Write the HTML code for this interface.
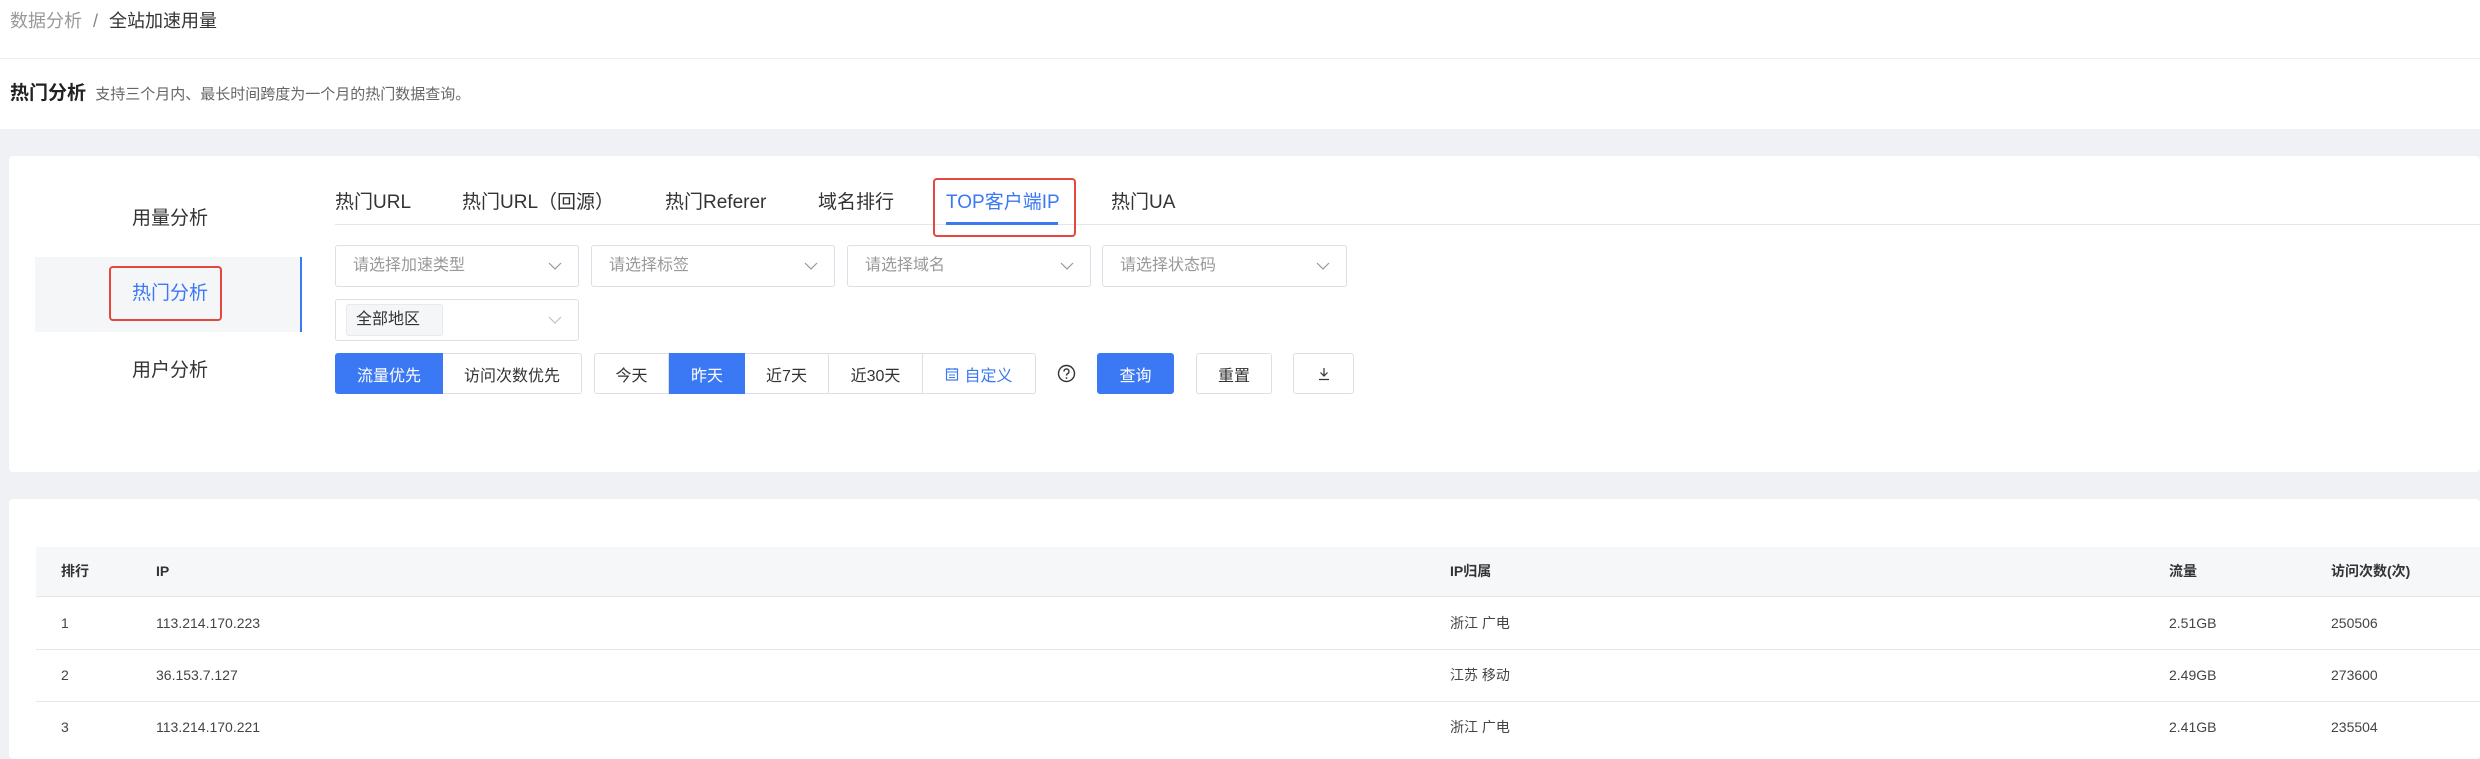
<!DOCTYPE html>
<html><head><meta charset="utf-8"><style>
*{box-sizing:border-box;margin:0;padding:0}
body{width:2480px;height:750px;overflow:hidden;background:#f0f1f4;font-family:"Liberation Sans","Noto Sans CJK SC",sans-serif;color:#333;position:relative}
.a{position:absolute}
.t{position:absolute;white-space:nowrap;line-height:1}
.sel{position:absolute;border:1px solid #dcdfe6;border-radius:3px;background:#fff;height:42px}
.sel span{position:absolute;left:17px;top:12px;font-size:16px;color:#999;line-height:1}
.arr{position:absolute;right:16px;top:13px;width:14px;height:14px}
.btn{position:absolute;top:353px;height:41px;border:1px solid #dcdfe6;background:#fff;font-size:16px;display:flex;align-items:center;justify-content:center;color:#333}
.blue{background:#3b78f3;color:#fff;border-color:#3b78f3}
.tab{position:absolute;top:193px;font-size:19px;white-space:nowrap;line-height:1}
.th{position:absolute;top:564px;font-size:14px;font-weight:bold;white-space:nowrap;line-height:1}
.td{position:absolute;font-size:14px;white-space:nowrap;line-height:1;color:#444}
</style></head><body>
<div class="a" style="left:0;top:0;width:2480px;height:58px;background:#fff"></div>
<div class="t" style="left:10px;top:12px;font-size:18px;color:#999">数据分析 <span style="color:#888;margin:0 6px">/</span> <span style="color:#333">全站加速用量</span></div>
<div class="a" style="left:0;top:58px;width:2480px;height:71px;background:#fff;border-top:1px solid #f0f0f0"></div>
<div class="t" style="left:10px;top:84px;font-size:19px;font-weight:bold;color:#222">热门分析 <span style="font-size:15px;font-weight:normal;color:#666;margin-left:4px">支持三个月内、最长时间跨度为一个月的热门数据查询。</span></div>

<div class="a" style="left:9px;top:156px;width:2471px;height:316px;background:#fff;border-radius:4px"></div>
<div class="t" style="left:132px;top:209px;font-size:19px;color:#333">用量分析</div>
<div class="a" style="left:35px;top:257px;width:267px;height:75px;background:#f5f6f8;border-right:2px solid #3b78f3"></div>
<div class="t" style="left:132px;top:284px;font-size:19px;color:#3b78f3">热门分析</div>
<div class="a" style="left:109px;top:266px;width:113px;height:55px;border:2px solid #e5473f;border-radius:4px"></div>
<div class="t" style="left:132px;top:361px;font-size:19px;color:#333">用户分析</div>

<div class="tab" style="left:335px">热门URL</div>
<div class="tab" style="left:462px">热门URL（回源）</div>
<div class="tab" style="left:665px">热门Referer</div>
<div class="tab" style="left:818px">域名排行</div>
<div class="tab" style="left:946px;color:#3b78f3">TOP客户端IP</div>
<div class="tab" style="left:1111px">热门UA</div>
<div class="a" style="left:335px;top:224px;width:2145px;height:1px;background:#e4e6eb"></div>
<div class="a" style="left:946px;top:222px;width:112px;height:3px;background:#3b78f3"></div>
<div class="a" style="left:933px;top:178px;width:143px;height:59px;border:2px solid #e5473f;border-radius:4px"></div>

<div class="sel" style="left:335px;top:245px;width:244px"><span>请选择加速类型</span><svg class="arr" viewBox="0 0 14 14"><path d="M1 4l6 6 6-6" fill="none" stroke="#999" stroke-width="1.2"/></svg></div>
<div class="sel" style="left:591px;top:245px;width:244px"><span>请选择标签</span><svg class="arr" viewBox="0 0 14 14"><path d="M1 4l6 6 6-6" fill="none" stroke="#999" stroke-width="1.2"/></svg></div>
<div class="sel" style="left:847px;top:245px;width:244px"><span>请选择域名</span><svg class="arr" viewBox="0 0 14 14"><path d="M1 4l6 6 6-6" fill="none" stroke="#999" stroke-width="1.2"/></svg></div>
<div class="sel" style="left:1102px;top:245px;width:245px"><span>请选择状态码</span><svg class="arr" viewBox="0 0 14 14"><path d="M1 4l6 6 6-6" fill="none" stroke="#999" stroke-width="1.2"/></svg></div>
<div class="sel" style="left:335px;top:299px;width:244px"><div class="a" style="left:10px;top:4px;width:97px;height:32px;background:#f5f6f8;border:1px solid #e8e9ec;border-radius:3px"></div><span style="color:#333;left:20px;top:12px">全部地区</span><svg class="arr" viewBox="0 0 14 14" style="opacity:.6"><path d="M1 4l6 6 6-6" fill="none" stroke="#999" stroke-width="1.2"/></svg></div>

<div class="btn blue" style="left:335px;width:108px;border-radius:3px 0 0 3px">流量优先</div>
<div class="btn" style="left:443px;width:139px;border-left:none;border-radius:0 3px 3px 0">访问次数优先</div>
<div class="btn" style="left:594px;width:75px;border-radius:3px 0 0 3px">今天</div>
<div class="btn blue" style="left:669px;width:76px">昨天</div>
<div class="btn" style="left:745px;width:84px;border-left:none">近7天</div>
<div class="btn" style="left:829px;width:94px;border-left:none">近30天</div>
<div class="btn" style="left:923px;width:113px;border-left:none;border-radius:0 3px 3px 0;color:#3b78f3"><svg width="14" height="14" viewBox="0 0 14 14" style="margin-right:5px"><rect x="1.5" y="2" width="11" height="11" fill="none" stroke="#3b78f3" stroke-width="1.2"/><path d="M1.5 5h11M4 1v2M10 1v2M4 8h6M4 10.5h6" stroke="#3b78f3" stroke-width="1"/></svg>自定义</div>
<svg class="a" style="left:1057px;top:364px" width="19" height="19" viewBox="0 0 19 19"><circle cx="9.5" cy="9.5" r="8" fill="none" stroke="#333" stroke-width="1.4"/><path d="M7 7.5a2.5 2.5 0 1 1 3.5 2.2c-.8.4-1 .9-1 1.8" fill="none" stroke="#333" stroke-width="1.4"/><circle cx="9.5" cy="14" r=".9" fill="#333"/></svg>
<div class="btn blue" style="left:1097px;width:77px;border-radius:3px">查询</div>
<div class="btn" style="left:1196px;width:76px;border-radius:3px">重置</div>
<div class="btn" style="left:1293px;width:61px;border-radius:3px"><svg width="14" height="14" viewBox="0 0 14 14"><path d="M7 1v8M3.5 5.5L7 9l3.5-3.5M2 12.5h10" fill="none" stroke="#333" stroke-width="1.2"/></svg></div>

<div class="a" style="left:9px;top:499px;width:2471px;height:260px;background:#fff;border-radius:4px"></div>
<div class="a" style="left:36px;top:547px;width:2444px;height:50px;background:#f6f7f9;border-bottom:1px solid #e4e6eb"></div>
<div class="a" style="left:36px;top:649px;width:2444px;height:1px;background:#e4e6eb"></div>
<div class="a" style="left:36px;top:701px;width:2444px;height:1px;background:#e4e6eb"></div>
<div class="th" style="left:61px">排行</div>
<div class="th" style="left:156px">IP</div>
<div class="th" style="left:1450px">IP归属</div>
<div class="th" style="left:2169px">流量</div>
<div class="th" style="left:2331px">访问次数(次)</div>

<div class="td" style="left:61px;top:616px">1</div>
<div class="td" style="left:156px;top:616px">113.214.170.223</div>
<div class="td" style="left:1450px;top:616px">浙江 广电</div>
<div class="td" style="left:2169px;top:616px">2.51GB</div>
<div class="td" style="left:2331px;top:616px">250506</div>

<div class="td" style="left:61px;top:668px">2</div>
<div class="td" style="left:156px;top:668px">36.153.7.127</div>
<div class="td" style="left:1450px;top:668px">江苏 移动</div>
<div class="td" style="left:2169px;top:668px">2.49GB</div>
<div class="td" style="left:2331px;top:668px">273600</div>

<div class="td" style="left:61px;top:720px">3</div>
<div class="td" style="left:156px;top:720px">113.214.170.221</div>
<div class="td" style="left:1450px;top:720px">浙江 广电</div>
<div class="td" style="left:2169px;top:720px">2.41GB</div>
<div class="td" style="left:2331px;top:720px">235504</div>
</body></html>
